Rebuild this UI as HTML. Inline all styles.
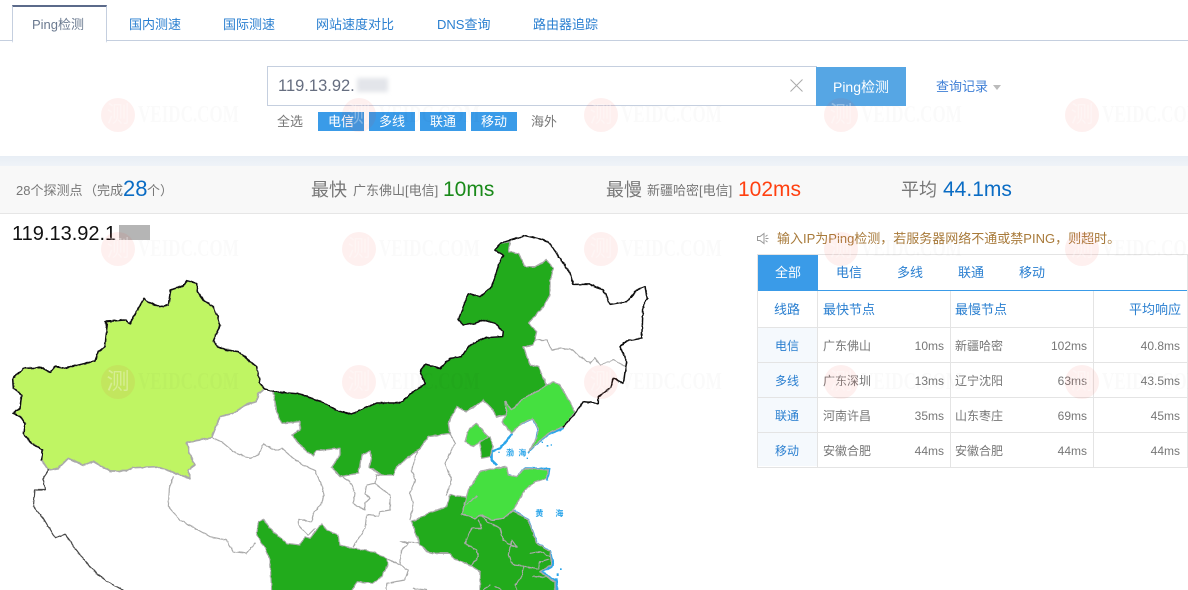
<!DOCTYPE html>
<html lang="zh">
<head>
<meta charset="utf-8">
<title>Ping检测</title>
<style>
html,body{margin:0;padding:0;background:#fff}
body{width:1188px;height:590px;overflow:hidden;position:relative;font-family:"Liberation Sans","Noto Sans CJK SC",sans-serif;font-size:13px;color:#777}
.a{position:absolute;white-space:nowrap}
.tab{top:16px;line-height:18px;color:#2a7fd0;font-size:13px}
.chip{top:112px;width:46px;height:19px;line-height:19px;background:#3a9be8;color:#fff;text-align:center}
.t12{font-size:12px;line-height:16px;color:#777}
.h{font-size:13px;line-height:18px;color:#2a7fd0}
.l{font-size:13px;line-height:18px;color:#2a7fd0;width:60px;text-align:center;left:757px}
.r{text-align:right}
.ln{position:absolute;background:#e4e4e4}
.wc{position:absolute;width:34px;height:34px;border-radius:50%;background:rgba(238,60,40,.075);color:rgba(255,255,255,.32);font-size:23px;line-height:33px;text-align:center;z-index:20}
.wt{position:absolute;font-family:"Liberation Serif",serif;font-weight:bold;font-size:24px;line-height:24px;color:rgba(0,0,0,.02);transform:scaleX(.71);transform-origin:0 0;z-index:20;white-space:nowrap}
</style>
</head>
<body>
<!-- tabs -->
<div class="a" style="left:0;top:40px;width:1188px;height:1px;background:#c5cfdf"></div>
<div class="a" style="left:12px;top:5px;width:93px;height:34px;border:1px solid #c5cfdf;border-top:2px solid #5b6a8a;border-bottom:2px solid #fff;background:#fff"></div>
<div class="a tab" style="left:32px;color:#6b7a90">Ping检测</div>
<div class="a tab" style="left:129px">国内测速</div>
<div class="a tab" style="left:223px">国际测速</div>
<div class="a tab" style="left:316px">网站速度对比</div>
<div class="a tab" style="left:437px">DNS查询</div>
<div class="a tab" style="left:533px">路由器追踪</div>

<!-- search -->
<div class="a" style="left:267px;top:66px;width:548px;height:38px;border:1px solid #c5cfdf"></div>
<div class="a" style="left:278px;top:76px;font-size:16.5px;line-height:20px;color:#666e80">119.13.92.</div>
<div class="a" style="left:357px;top:78px;width:31px;height:14px;background:#e3e5ea;filter:blur(2px)"></div>
<svg class="a" style="left:790px;top:79px" width="13" height="13" viewBox="0 0 13 13"><path d="M.5.5l12 12M12.5.5l-12 12" stroke="#aaa" stroke-width="1" fill="none"/></svg>
<div class="a" style="left:816px;top:67px;width:90px;height:39px;line-height:41px;background:#56a6e4;color:#fff;text-align:center;font-size:14px">Ping检测</div>
<div class="a" style="left:936px;top:78px;line-height:18px;color:#3f7fd6">查询记录</div>
<div class="a" style="left:993px;top:85px;width:0;height:0;border:4px solid transparent;border-top:5px solid #bbb"></div>
<div class="a" style="left:277px;top:112px;line-height:19px">全选</div>
<div class="a chip" style="left:318px">电信</div>
<div class="a chip" style="left:369px">多线</div>
<div class="a chip" style="left:420px">联通</div>
<div class="a chip" style="left:471px">移动</div>
<div class="a" style="left:531px;top:112px;line-height:19px">海外</div>

<!-- stats -->
<div class="a" style="left:0;top:156px;width:1188px;height:10px;background:linear-gradient(#e8eef5,#eff3f8)"></div>
<div class="a" style="left:0;top:166px;width:1188px;height:47px;background:#f8f8f8;border-bottom:1px solid #e6e6e6"></div>
<div class="a" style="left:16px;top:182px;line-height:18px">28个探测点</div>
<div class="a" style="left:84px;top:182px;line-height:18px">（完成</div>
<div class="a" style="left:123px;top:176px;font-size:22px;line-height:26px;color:#0a6cc4">28</div>
<div class="a" style="left:147px;top:182px;line-height:18px">个）</div>
<div class="a" style="left:311px;top:177px;font-size:18px;line-height:26px">最快</div>
<div class="a" style="left:353px;top:182px;line-height:18px">广东佛山[电信]</div>
<div class="a" style="left:443px;top:177px;font-size:21px;line-height:25px;color:#1a8a1a">10ms</div>
<div class="a" style="left:606px;top:177px;font-size:18px;line-height:26px">最慢</div>
<div class="a" style="left:647px;top:182px;line-height:18px">新疆哈密[电信]</div>
<div class="a" style="left:738px;top:177px;font-size:21px;line-height:25px;color:#ff4010">102ms</div>
<div class="a" style="left:901px;top:177px;font-size:18px;line-height:26px">平均</div>
<div class="a" style="left:943px;top:177px;font-size:21px;line-height:25px;color:#0a6cc4">44.1ms</div>

<!-- title -->
<div class="a" style="left:12px;top:222px;font-size:20px;line-height:24px;color:#111">119.13.92.1</div>
<div class="a" style="left:119px;top:225px;width:31px;height:15px;background:#b5b5b5"></div>

<!-- map -->
<svg class="a" style="left:0;top:0" width="750" height="590" viewBox="0 0 750 590">
<defs>
 <filter id="r" filterUnits="userSpaceOnUse" x="0" y="200" width="750" height="400">
  <feTurbulence type="fractalNoise" baseFrequency=".22" numOctaves="2" seed="4" result="n"/>
  <feDisplacementMap in="SourceGraphic" in2="n" scale="2.2" xChannelSelector="R" yChannelSelector="G"/>
 </filter>
</defs>
<g filter="url(#r)">
<g transform="translate(0,215) scale(.33333)" stroke-linejoin="round" stroke-linecap="round">
 <polygon fill="#bff563" stroke="#aaa" stroke-width="5" points="38,490 70,460 125,458 150,472 165,455 195,460 285,438 295,410 315,395 322,325 315,320 375,315 390,325 432,250 445,262 480,275 505,270 512,225 550,212 560,197 590,205 592,230 610,255 640,275 655,310 660,330 640,378 650,393 680,405 715,410 745,435 770,455 780,505 795,522 775,535 770,560 740,568 700,595 660,605 635,668 560,683 570,720 585,750 565,765 570,790 520,772 470,755 400,758 380,768 330,768 280,740 250,750 205,730 175,760 145,765 125,735 128,705 95,685 70,655 75,625 62,605 40,595 60,580 65,540 40,520"/>
 <polyline fill="none" stroke="#111" stroke-width="4.5" points="125,735 128,705 95,685 70,655 75,625 62,605 40,595 60,580 65,540 40,520 38,490 70,460 125,458 150,472 165,455 195,460 285,438 295,410 315,395 322,325 315,320 375,315 390,325 432,250 445,262 480,275 505,270 512,225 550,212 560,197 590,205 592,230 610,255 640,275 655,310 660,330 640,378 650,393 680,405 715,410 745,435 770,455 780,505 795,522"/>
 <polyline fill="none" stroke="#444" stroke-width="3.5" points="145,765 130,790 135,825 105,825 100,875 130,910 165,968 195,958 240,1020 265,1050 295,1080 330,1105 370,1125"/>
 <polyline fill="none" stroke="#aaa" stroke-width="3.5" points="520,785 508,820 505,875 540,915 630,965 680,975 700,1010 740,1015 765,985"/>
</g>
<g transform="translate(340,215) scale(.33333)" stroke-linejoin="round" stroke-linecap="round">
 <!-- white province lines -->
 <g fill="none" stroke="#aaa" stroke-width="3.5">
  <polyline points="-385,668 -355,680 -320,710 -270,730 -245,720 -230,687 -195,707 -175,700 -140,730 -110,750 -75,767 -55,810 -48,840 -55,865 -80,895 -85,920 -125,913 -125,930 -95,960 -75,940"/>
  <polyline points="235,700 215,765 225,795 210,835 220,870 210,915"/>
  <polyline points="330,655 345,685 315,745 335,795 320,840"/>
  <polyline points="10,787 30,800 45,835 40,865 75,885 75,865 90,850 75,835 80,810 105,805 150,840 150,885 120,890 115,903 80,900 75,940 55,970 40,995"/>
  <polyline points="105,805 110,780 125,780"/>
  <polyline points="140,1030 180,1050 205,1065 195,1095 140,1105 140,1125"/>
  <polyline points="180,1050 185,1005 205,985 180,980 235,983"/>
  <polyline points="220,1120 260,1125"/>
  <polyline points="580,375 620,375 635,405 665,400 700,405 720,425 750,445 765,428 780,450 820,435 858,455"/>
 </g>
 <!-- sichuan -->
 <polygon fill="#24ab1f" stroke="#aaa" stroke-width="3.5" points="-250,960 -245,920 -230,913 -205,945 -160,985 -120,990 -105,965 -90,970 -70,945 -55,925 -40,945 -5,960 -2,990 40,1000 100,1010 140,1030 145,1045 125,1085 100,1105 50,1100 35,1130 -205,1130 -210,1035 -225,1000"/>
 <!-- coast under -->
 <g fill="none" stroke="#2aa5ea" stroke-width="7">
  <polyline points="670,640 625,657 585,690 565,712"/>
  <polyline points="515,658 480,700 455,710 455,735 470,750"/>
  <polyline points="545,625 578,610 595,640 590,670"/>
  <polyline points="505,780 530,788 555,760 628,762 622,792"/>
  <polyline points="520,887 565,915 590,985 630,1010 640,1050 605,1070 650,1100 650,1125"/>
 </g>
 <!-- inner mongolia -->
 <polygon fill="#24ab1f" stroke="#aaa" stroke-width="4" points="-200,530 -120,537 -54,561 -6,588 36,597 111,564 180,564 219,531 255,507 240,470 255,447 300,460 330,430 365,425 385,395 415,377 440,368 488,365 490,350 465,325 430,315 405,325 370,330 355,315 385,235 420,245 455,215 480,140 490,120 465,105 480,85 510,80 505,110 535,115 555,155 585,155 620,135 640,160 630,200 630,240 610,275 565,325 590,350 580,390 550,395 570,450 595,455 620,510 590,530 550,550 515,585 495,560 500,600 470,605 455,580 430,555 410,570 380,590 350,575 325,625 330,655 265,665 240,700 170,755 160,780 125,780 88,757 95,727 90,707 65,720 55,775 0,785 -25,757 0,720 0,700 -70,707 -80,723 -105,705 -145,660 -120,645 -120,620 -175,625 -190,590"/>
 <!-- liaoning -->
 <polygon fill="#45e041" stroke="#aaa" stroke-width="4" points="620,510 640,500 660,510 680,545 705,590 670,635 625,655 585,690 565,710 590,670 595,640 578,610 545,625 515,655 485,620 500,600 495,560 515,585 550,550 590,530"/>
 <!-- tianjin / beijing -->
 <polygon fill="#24ab1f" stroke="#aaa" stroke-width="3.5" points="425,670 450,665 460,695 450,725 425,730 420,690"/>
 <polygon fill="#45e041" stroke="#aaa" stroke-width="3.5" points="410,625 430,650 445,665 420,680 400,695 375,680 385,645"/>
 <!-- henan anhui jiangsu -->
 <polygon fill="#24ab1f" stroke="#aaa" stroke-width="4" points="215,920 275,890 320,875 330,840 385,847 365,897 405,910 425,900 455,915 490,910 520,887 565,915 590,985 630,1010 635,1050 600,1070 645,1100 645,1130 420,1130 420,1070 390,1050 340,1030 330,1015 270,1015 240,990"/>
 <g fill="none" stroke="#aaa" stroke-width="3.5">
  <polyline points="415,915 425,940 395,940 375,985 410,1005 415,1025 395,1050"/>
  <polyline points="425,900 440,920 480,940 490,975 510,990 530,995 515,975 505,1020 520,1050 550,1053 595,1063 600,1040 625,1033"/>
  <polyline points="552,1053 545,1085 525,1110 530,1125"/>
  <polyline points="570,1015 600,1010 630,1025"/>
  <polyline points="450,1110 430,1125"/>
  <polyline points="465,1115 485,1125"/>
  <polyline points="580,1085 620,1085 640,1100"/>
 </g>
 <!-- shandong -->
 <polygon fill="#45e041" stroke="#aaa" stroke-width="4" points="365,897 385,825 420,770 470,760 500,755 505,780 530,785 555,760 625,765 620,790 585,800 555,825 520,885 490,910 455,915 425,900 405,910"/>
 <polyline fill="none" stroke="#aaa" stroke-width="3.5" points="380,867 410,843"/>
 <!-- black borders -->
 <polyline fill="none" stroke="#111" stroke-width="4.5" points="-225,522 -200,530 -120,537 -54,561 -6,588 36,597 111,564 180,564 219,531 255,507 240,470 255,447 300,460 330,430 365,425 385,395 415,377 440,368 488,365 490,350 465,325 430,315 405,325 370,330 355,315 385,235 420,245 455,215 480,140 490,120 465,105 480,85 555,62 600,72 625,80 650,115 690,175 700,208 750,208 790,225 810,268 860,260 890,225 915,215 922,250 910,270 905,370 860,378 840,395 860,440 850,505 820,490 810,520 775,545 775,565 730,560 705,595 670,635"/>
</g>
</g>
<g transform="translate(340,215) scale(.33333)">
 <g fill="#2aa5ea">
  <rect x="620" y="690" width="5" height="5"/><rect x="632" y="688" width="4" height="4"/><rect x="605" y="680" width="4" height="4"/>
  <rect x="660" y="1060" width="5" height="5"/><rect x="650" y="1075" width="6" height="8"/><rect x="645" y="1090" width="8" height="8"/>
  <rect x="560" y="728" width="4" height="4"/><rect x="475" y="710" width="4" height="4"/>
  <text x="498" y="722" font-size="24" font-weight="bold" font-family="'Liberation Sans','Noto Sans CJK SC',sans-serif">渤</text>
  <text x="535" y="722" font-size="24" font-weight="bold" font-family="'Liberation Sans','Noto Sans CJK SC',sans-serif">海</text>
  <text x="586" y="903" font-size="24" font-weight="bold" font-family="'Liberation Sans','Noto Sans CJK SC',sans-serif">黄</text>
  <text x="646" y="903" font-size="24" font-weight="bold" font-family="'Liberation Sans','Noto Sans CJK SC',sans-serif">海</text>
 </g>
</g>
</svg>

<!-- notice -->
<svg class="a" style="left:757px;top:232px" width="12" height="13" viewBox="0 0 12 13"><path d="M.5 4.5h2.5L7 1.5v10L3 8.5H.5zM8.5 4.5l2-1.5M8.5 6.5h3M8.5 8.5l2 1.5" fill="none" stroke="#999" stroke-width="1"/></svg>
<div class="a" style="left:777px;top:230px;font-size:13px;line-height:18px;color:#a87a3a">输入IP为Ping检测，若服务器网络不通或禁PING，则超时。</div>

<!-- table -->
<div class="a" style="left:757px;top:254px;width:429px;height:212px;border:1px solid #e4e4e4"></div>
<div class="a" style="left:758px;top:255px;width:60px;height:35px;line-height:36px;background:#3a9be8;color:#fff;text-align:center">全部</div>
<div class="a" style="left:758px;top:290px;width:429px;height:1px;background:#3a9be8"></div>
<div class="a h" style="left:836px;top:264px">电信</div>
<div class="a h" style="left:897px;top:264px">多线</div>
<div class="a h" style="left:958px;top:264px">联通</div>
<div class="a h" style="left:1019px;top:264px">移动</div>
<div class="a" style="left:758px;top:328px;width:59px;height:138px;background:#f5f9fd"></div>
<div class="ln" style="left:817px;top:291px;width:1px;height:176px"></div>
<div class="ln" style="left:950px;top:291px;width:1px;height:176px"></div>
<div class="ln" style="left:1093px;top:291px;width:1px;height:176px"></div>
<div class="ln" style="left:758px;top:327px;width:429px;height:1px"></div>
<div class="ln" style="left:758px;top:362px;width:429px;height:1px"></div>
<div class="ln" style="left:758px;top:397px;width:429px;height:1px"></div>
<div class="ln" style="left:758px;top:432px;width:429px;height:1px"></div>

<div class="a l" style="top:301px">线路</div>
<div class="a h" style="left:823px;top:301px">最快节点</div>
<div class="a h" style="left:955px;top:301px">最慢节点</div>
<div class="a h" style="left:1129px;top:301px">平均响应</div>

<div class="a l" style="top:337px;font-size:12px">电信</div>
<div class="a t12" style="left:823px;top:338px">广东佛山</div>
<div class="a t12 r" style="left:884px;width:60px;top:338px">10ms</div>
<div class="a t12" style="left:955px;top:338px">新疆哈密</div>
<div class="a t12 r" style="left:1027px;width:60px;top:338px">102ms</div>
<div class="a t12 r" style="left:1120px;width:60px;top:338px">40.8ms</div>

<div class="a l" style="top:372px;font-size:12px">多线</div>
<div class="a t12" style="left:823px;top:373px">广东深圳</div>
<div class="a t12 r" style="left:884px;width:60px;top:373px">13ms</div>
<div class="a t12" style="left:955px;top:373px">辽宁沈阳</div>
<div class="a t12 r" style="left:1027px;width:60px;top:373px">63ms</div>
<div class="a t12 r" style="left:1120px;width:60px;top:373px">43.5ms</div>

<div class="a l" style="top:407px;font-size:12px">联通</div>
<div class="a t12" style="left:823px;top:408px">河南许昌</div>
<div class="a t12 r" style="left:884px;width:60px;top:408px">35ms</div>
<div class="a t12" style="left:955px;top:408px">山东枣庄</div>
<div class="a t12 r" style="left:1027px;width:60px;top:408px">69ms</div>
<div class="a t12 r" style="left:1120px;width:60px;top:408px">45ms</div>

<div class="a l" style="top:442px;font-size:12px">移动</div>
<div class="a t12" style="left:823px;top:443px">安徽合肥</div>
<div class="a t12 r" style="left:884px;width:60px;top:443px">44ms</div>
<div class="a t12" style="left:955px;top:443px">安徽合肥</div>
<div class="a t12 r" style="left:1027px;width:60px;top:443px">44ms</div>
<div class="a t12 r" style="left:1120px;width:60px;top:443px">44ms</div>

<!-- watermarks -->
<div class="wc" style="left:101px;top:98px">测</div><div class="wt" style="left:138px;top:103px">VEIDC.COM</div>
<div class="wc" style="left:342px;top:98px">测</div><div class="wt" style="left:379px;top:103px">VEIDC.COM</div>
<div class="wc" style="left:584px;top:98px">测</div><div class="wt" style="left:621px;top:103px">VEIDC.COM</div>
<div class="wc" style="left:824px;top:98px">测</div><div class="wt" style="left:861px;top:103px">VEIDC.COM</div>
<div class="wc" style="left:1065px;top:98px">测</div><div class="wt" style="left:1102px;top:103px">VEIDC.COM</div>

<div class="wc" style="left:101px;top:232px">测</div><div class="wt" style="left:138px;top:237px">VEIDC.COM</div>
<div class="wc" style="left:342px;top:232px">测</div><div class="wt" style="left:379px;top:237px">VEIDC.COM</div>
<div class="wc" style="left:584px;top:232px">测</div><div class="wt" style="left:621px;top:237px">VEIDC.COM</div>
<div class="wc" style="left:824px;top:232px">测</div><div class="wt" style="left:861px;top:237px">VEIDC.COM</div>
<div class="wc" style="left:1065px;top:232px">测</div><div class="wt" style="left:1102px;top:237px">VEIDC.COM</div>

<div class="wc" style="left:101px;top:365px">测</div><div class="wt" style="left:138px;top:370px">VEIDC.COM</div>
<div class="wc" style="left:342px;top:365px">测</div><div class="wt" style="left:379px;top:370px">VEIDC.COM</div>
<div class="wc" style="left:584px;top:365px">测</div><div class="wt" style="left:621px;top:370px">VEIDC.COM</div>
<div class="wc" style="left:824px;top:365px">测</div><div class="wt" style="left:861px;top:370px">VEIDC.COM</div>
<div class="wc" style="left:1065px;top:365px">测</div><div class="wt" style="left:1102px;top:370px">VEIDC.COM</div>
</body>
</html>
